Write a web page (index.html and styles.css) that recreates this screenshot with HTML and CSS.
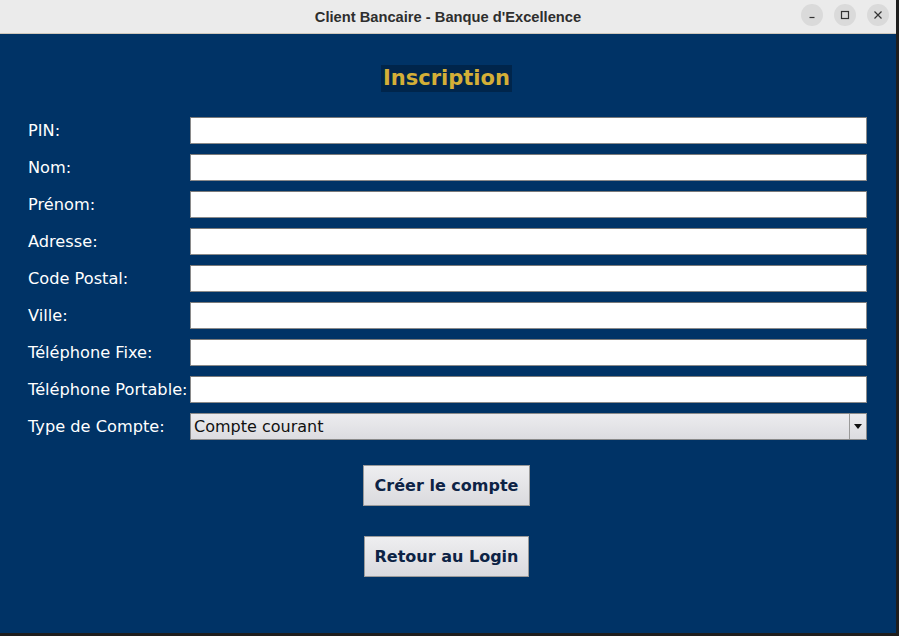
FILE: index.html
```html
<!DOCTYPE html>
<html lang="fr">
<head>
<meta charset="utf-8">
<title>Client Bancaire - Banque d'Excellence</title>
<link rel="stylesheet" href="styles.css">
</head>
<body>
<div class="window">
  <header class="titlebar">
    <span class="title">Client Bancaire - Banque d'Excellence</span>
    <div class="controls">
      <span class="ctl"><svg width="10" height="10" viewBox="0 0 10 10"><path d="M2.5 7.5h5" stroke="#333" stroke-width="1.2"/></svg></span>
      <span class="ctl"><svg width="10" height="10" viewBox="0 0 10 10"><rect x="1.5" y="1.5" width="7" height="7" fill="none" stroke="#333" stroke-width="1.2"/></svg></span>
      <span class="ctl"><svg width="10" height="10" viewBox="0 0 10 10"><path d="M1.5 1.5l7 7M8.5 1.5l-7 7" stroke="#333" stroke-width="1.2"/></svg></span>
    </div>
  </header>
  <main class="content">
    <h1 class="heading">Inscription</h1>
    <form class="form">
      <label class="lbl">PIN:</label><input class="field" type="text">
      <label class="lbl">Nom:</label><input class="field" type="text">
      <label class="lbl">Prénom:</label><input class="field" type="text">
      <label class="lbl">Adresse:</label><input class="field" type="text">
      <label class="lbl">Code Postal:</label><input class="field" type="text">
      <label class="lbl">Ville:</label><input class="field" type="text">
      <label class="lbl">Téléphone Fixe:</label><input class="field" type="text">
      <label class="lbl">Téléphone Portable:</label><input class="field" type="text">
      <label class="lbl">Type de Compte:</label>
      <div class="combo"><span class="combo-text">Compte courant</span><span class="combo-arrow"><svg width="8" height="5" viewBox="0 0 8 5"><path d="M0 0h8L4 5z" fill="#111"/></svg></span></div>
    </form>
    <div class="actions">
      <button class="btn btn-create" type="button">Créer le compte</button>
      <button class="btn btn-back" type="button">Retour au Login</button>
    </div>
  </main>
</div>
</body>
</html>
```
FILE: styles.css
```css
* { box-sizing: border-box; }
html, body { margin: 0; padding: 0; }
body {
  width: 899px;
  height: 636px;
  background: #1e1e1e;
  font-family: "DejaVu Sans", sans-serif;
  overflow: hidden;
}
.window {
  width: 896px;
  height: 633px;
  display: flex;
  flex-direction: column;
  background: #003366;
}
.titlebar {
  height: 34px;
  flex: none;
  background: #ebebeb;
  border-bottom: 1px solid #cfc7bb;
  display: flex;
  align-items: center;
  justify-content: center;
  position: relative;
}
.title {
  font-family: "Liberation Sans", sans-serif;
  font-weight: bold;
  font-size: 14.7px;
  color: #2e2e2e;
}
.controls {
  position: absolute;
  right: 7px;
  top: 4px;
  display: flex;
  gap: 11px;
}
.ctl {
  width: 22px;
  height: 22px;
  border-radius: 50%;
  background: #dadada;
  display: flex;
  align-items: center;
  justify-content: center;
}
.content {
  flex: 1;
  display: flex;
  flex-direction: column;
  align-items: center;
  padding-top: 31px;
  padding-right: 3px;
}
.heading {
  margin: 0;
  font-size: 21px;
  font-weight: bold;
  color: #d4af37;
  background: #00254b;
  padding: 0 2px;
  height: 27px;
  line-height: 26px;
}
.form {
  margin-top: 25px;
  align-self: stretch;
  display: grid;
  grid-template-columns: 162px 677px;
  row-gap: 10px;
  padding-left: 28px;
}
.lbl {
  color: #ffffff;
  font-size: 16.2px;
  height: 27px;
  line-height: 27px;
  white-space: nowrap;
}
.field {
  width: 677px;
  height: 27px;
  margin: 0;
  border: 1px solid #8a8a8a;
  border-top-color: #7a7a7a;
  background: #ffffff;
  padding: 0 4px;
  font-family: "DejaVu Sans", sans-serif;
  font-size: 16px;
  outline: none;
}
.combo {
  height: 27px;
  width: 677px;
  display: flex;
  border: 1px solid #8a8a8a;
  background: linear-gradient(#ececef, #dcdce0);
}
.combo-text {
  flex: 1;
  font-size: 16px;
  color: #111;
  line-height: 25px;
  padding-left: 3px;
}
.combo-arrow {
  width: 17px;
  border-left: 1px solid #9a9a9a;
  display: flex;
  align-items: center;
  justify-content: center;
}
.actions {
  margin-top: 25px;
  display: flex;
  flex-direction: column;
  align-items: center;
  gap: 30px;
}
.btn {
  height: 41px;
  border: 1px solid #9a9a9a;
  background: linear-gradient(#eeeef0, #dadade);
  color: #0d2345;
  font-family: "DejaVu Sans", sans-serif;
  font-weight: bold;
  font-size: 16px;
  padding: 0;
  margin: 0;
}
.btn-create { width: 167px; }
.btn-back { width: 165px; }
```
